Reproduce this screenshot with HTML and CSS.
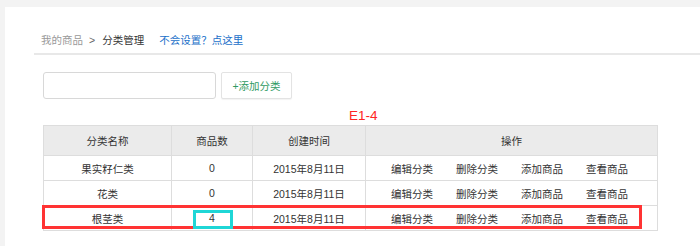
FILE: index.html
```html
<!DOCTYPE html>
<html>
<head>
  <meta charset="utf-8">
  <title>分类管理</title>
  <link rel="stylesheet" href="styles.css">
</head>
<body>
  <div class="panel">
    <div class="crumbs">
      <span class="crumb-muted">我的商品</span>
      <span class="crumb-sep">&gt;</span>
      <span class="crumb-current">分类管理</span>
      <a class="crumb-help" href="#">不会设置？点这里</a>
    </div>

    <div class="add-row">
      <input class="add-input" type="text">
      <button class="add-btn">+添加分类</button>
    </div>

    <div class="tag">E1-4</div>

    <div class="table-wrap">
      <table class="cats">
        <thead>
          <tr>
            <th class="c-name">分类名称</th>
            <th class="c-num">商品数</th>
            <th class="c-date">创建时间</th>
            <th class="c-ops">操作</th>
          </tr>
        </thead>
        <tbody>
          <tr>
            <td>果实籽仁类</td>
            <td>0</td>
            <td>2015年8月11日</td>
            <td><div class="ops"><a>编辑分类</a><a>删除分类</a><a>添加商品</a><a>查看商品</a></div></td>
          </tr>
          <tr>
            <td>花类</td>
            <td>0</td>
            <td>2015年8月11日</td>
            <td><div class="ops"><a>编辑分类</a><a>删除分类</a><a>添加商品</a><a>查看商品</a></div></td>
          </tr>
          <tr>
            <td>根茎类</td>
            <td>4</td>
            <td>2015年8月11日</td>
            <td><div class="ops"><a>编辑分类</a><a>删除分类</a><a>添加商品</a><a>查看商品</a></div></td>
          </tr>
        </tbody>
      </table>
      <div class="mark-row"></div>
      <div class="mark-cell"></div>
    </div>
  </div>
</body>
</html>
```

FILE: styles.css
```css
html, body {
  margin: 0;
  height: 100%;
}
body {
  background-color: #f3f3f3;
  font-family: "Liberation Sans", "Noto Sans CJK SC", sans-serif;
  font-size: 10.5px;
  color: #333;
  padding: 7px 0 0 5px;
  box-sizing: border-box;
  overflow: hidden;
}
.panel {
  background-color: #fff;
  height: 100%;
  padding-top: 26px;
  box-sizing: border-box;
}

.crumbs {
  display: flex;
  align-items: flex-start;
  margin-left: 29px;
  padding-left: 7px;
  height: 20px;
  line-height: 14px;
  border-bottom: 2px solid #e8e8e8;
}
.crumb-muted {
  color: #999;
}
.crumb-sep {
  color: #666;
  margin: 0 7px 0 6px;
}
.crumb-current {
  color: #333;
}
.crumb-help {
  color: #1a6fc9;
  text-decoration: none;
  margin-left: 15px;
}

.add-row {
  display: flex;
  gap: 5px;
  margin: 17px 0 0 38px;
}
.add-input {
  width: 173px;
  height: 27px;
  box-sizing: border-box;
  border: 1px solid #d8d8d8;
  border-radius: 3px;
  margin: 0;
}
.add-btn {
  width: 71px;
  height: 27px;
  box-sizing: border-box;
  border: 1px solid #e3e3e3;
  border-radius: 2px;
  background-color: #fff;
  color: #2f9a62;
  font-family: inherit;
  font-size: 10.5px;
  box-shadow: 0 1px 1px rgba(0, 0, 0, 0.05);
  padding: 0;
}

.tag {
  color: #ff2424;
  font-size: 13.5px;
  line-height: 16px;
  margin: 9px 0 0 344px;
  height: 17px;
}

.table-wrap {
  position: relative;
  margin-left: 38px;
  width: 615px;
}
.cats {
  width: 615px;
  border-collapse: collapse;
  table-layout: fixed;
}
.cats th,
.cats td {
  border: 1px solid #dddddd;
  text-align: center;
  padding: 0;
  font-weight: normal;
  color: #333;
}
.cats th {
  background-color: #ebebeb;
  height: 29px;
}
.cats td {
  height: 24px;
}
.c-name { width: 127px; }
.c-num { width: 80px; }
.c-date { width: 112px; }

.ops {
  display: flex;
  justify-content: center;
  gap: 23px;
  padding-right: 4px;
}

.mark-row {
  position: absolute;
  left: -1px;
  top: 80px;
  width: 600px;
  height: 24px;
  border: 3px solid #ff3333;
  box-sizing: border-box;
}
.mark-cell {
  position: absolute;
  left: 150px;
  top: 85px;
  width: 40px;
  height: 19px;
  border: 3px solid #1fd6d6;
  box-sizing: border-box;
}
```
